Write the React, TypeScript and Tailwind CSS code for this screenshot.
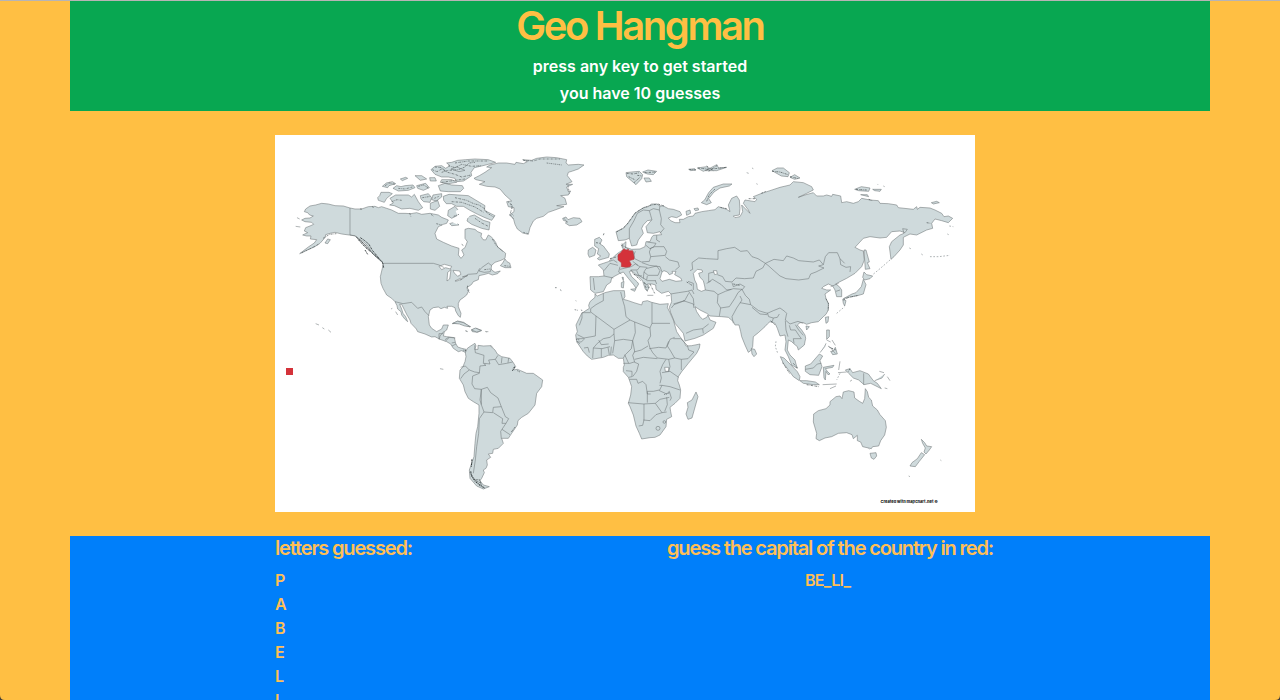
import React from "react";

const LAND = "#cfdadc";

const northAmerica = [
  "M225,219 L205,213 180,212 160,207 140,205 122,210 105,213 92,222 88,230 98,233 104,240 115,243 105,249 90,250 80,255 90,260 110,262 116,268 105,273 92,278 88,288 98,293 83,300 95,303 108,303 106,312 125,314 118,324 100,336 74,356 92,347 118,336 135,325 150,308 152,299 165,295 180,292 200,297 222,300 240,302 250,310 262,318 272,326 280,335 290,352 310,372 325,385 322,400 316,425 318,445 324,460 335,480 350,490 360,500 366,512 368,522 378,530 380,540 390,553 398,560 392,545 384,535 380,522 374,508 380,508 388,524 396,540 405,555 408,565 424,582 428,590 450,597 470,606 480,605 495,613 515,620 527,627 535,640 550,650 560,647 573,653 573,643 560,640 548,636 542,625 538,608 515,605 505,603 508,590 515,585 520,570 505,570 500,582 485,590 470,580 463,570 460,545 465,525 475,518 490,516 498,521 508,517 518,520 516,514 530,514 540,518 542,528 550,542 556,547 558,535 550,515 550,505 555,495 565,488 575,480 582,465 576,458 590,448 595,440 610,434 612,422 630,418 640,415 652,420 668,416 676,408 660,412 650,405 645,395 660,382 678,376 690,370 692,355 680,345 668,336 662,322 655,312 648,305 640,300 632,315 624,314 618,304 620,295 608,290 600,283 580,280 570,283 570,310 577,320 570,338 560,345 567,360 558,370 550,360 552,340 530,333 505,322 485,312 480,295 490,275 505,268 515,265 520,255 500,247 490,240 475,237 465,235 440,238 425,233 408,236 390,235 370,235 350,225 335,220 320,215 310,218 300,214 280,215 260,222 240,222Z",
  "M318,172 L342,172 352,176 335,190 328,202 310,196 308,188 314,182Z",
  "M345,190 L362,180 400,180 410,186 418,178 430,200 443,218 430,226 405,220 380,222 358,212 344,210 355,204Z",
  "M322,154 L334,144 352,140 362,146 342,152 338,158Z",
  "M354,160 L365,152 378,155 390,152 414,150 420,158 400,166 370,168Z M376,132 L392,127 398,130 382,137Z M420,122 L440,122 455,132 436,136Z M425,152 L452,145 463,158 445,166 428,160Z",
  "M468,104 L480,94 500,92 512,100 525,92 515,84 530,82 548,76 572,74 600,72 640,74 662,82 640,88 620,93 598,98 588,112 590,122 566,138 545,140 540,130 520,126 500,126 480,118Z",
  "M490,152 L510,145 530,150 562,152 566,160 556,170 520,170 496,168Z M464,128 L480,128 484,138 466,138Z M500,134 L530,134 545,142 520,146 496,142Z M528,102 L545,96 570,106 552,110Z",
  "M436,182 L460,176 470,188 465,202 446,200 438,192Z M474,180 L500,176 500,186 484,198 470,194Z M466,205 L488,196 494,214 480,226 466,222Z",
  "M505,184 L522,178 580,182 600,194 630,212 628,226 660,242 650,256 630,248 608,238 585,226 565,214 545,214 530,206 514,206 506,196Z",
  "M520,226 L540,214 552,228 546,242 530,250 518,242Z M580,245 L598,240 625,256 645,262 642,285 620,280 590,268 576,258Z M524,266 L542,260 552,270 530,272Z",
  "M683,384 L690,372 696,380 704,384 708,398 690,398 676,392Z M620,398 L640,384 650,392 646,410 628,412 612,408Z",
  "M66,248 L74,252 M62,274 L76,276 M150,324 L158,312 166,314 158,326Z M352,520 L348,522 M362,530 L368,540 M122,566 L132,570 M142,578 L148,582 M160,585 L168,592",
  "M532,566 L548,558 566,562 585,576 568,570 552,565Z M590,584 L604,580 620,586 608,592 592,590Z M572,588 L578,590 M632,590 L640,590",
];

const greenland =
  "M102,130 L118,122 135,112 155,98 140,96 150,90 175,84 200,84 225,88 228,82 250,86 262,80 248,74 275,76 290,70 320,66 350,68 380,74 378,84 385,90 415,88 432,90 415,102 398,108 385,112 382,122 396,140 378,148 398,148 380,156 385,170 392,168 385,180 362,182 375,190 380,208 350,212 372,215 345,225 325,232 310,244 290,250 280,258 270,278 265,298 248,294 232,282 225,268 220,250 208,240 222,230 222,218 205,215 200,200 215,198 195,180 180,162 165,156 140,154 118,148 135,140 108,134Z";

const iceland = "M368,250 L378,246 384,254 400,248 420,250 426,260 410,270 388,272 376,264 382,260 370,256Z";

const eurasia =
  "M290,162 L300,168 310,168 325,176 340,178 360,185 365,195 350,203 335,200 325,204 332,212 345,218 360,218 358,208 370,208 385,200 400,198 405,190 425,185 445,182 465,179 475,170 500,178 510,185 505,165 515,145 530,138 538,150 540,175 538,195 520,198 525,203 540,200 548,185 545,165 555,175 570,190 565,180 550,160 555,150 585,155 590,148 580,140 605,130 630,122 660,112 690,105 700,95 730,98 755,110 760,120 740,130 715,142 735,135 760,128 770,138 790,138 800,135 815,139 818,133 842,138 845,158 860,155 880,160 895,155 905,145 930,150 955,152 960,160 985,161 1010,165 1015,173 1060,178 1070,170 1072,178 1080,172 1110,174 1125,180 1145,190 1152,200 1165,198 1178,205 1165,218 1145,212 1125,207 1115,220 1118,235 1100,240 1070,255 1050,252 1030,262 1030,285 1020,300 1002,320 993,328 988,290 995,275 1020,255 1032,250 1028,236 1042,238 1035,248 1020,243 995,245 980,262 960,264 930,260 910,265 885,292 900,300 910,303 913,330 905,350 885,370 860,385 840,395 827,402 838,410 845,420 845,440 830,440 825,420 818,408 805,402 790,410 785,415 800,420 812,420 795,432 798,446 805,460 805,480 798,493 790,500 775,515 755,518 740,523 730,518 720,518 712,525 725,540 735,555 737,565 733,585 715,600 712,590 700,580 695,575 685,570 682,600 690,615 705,630 708,642 712,655 695,645 685,620 675,600 678,575 675,555 660,558 652,535 645,520 630,515 622,522 615,530 595,548 580,560 578,590 572,602 565,607 555,585 545,560 542,545 537,525 525,525 520,515 505,502 485,500 450,498 440,490 420,480 405,470 410,485 420,500 428,508 440,502 444,495 450,510 468,517 460,535 430,555 405,565 375,573 370,550 345,520 332,488 328,472 335,455 333,432 325,424 305,430 288,418 287,405 276,402 262,402 268,412 262,422 256,418 250,400 248,393 235,380 215,362 208,365 215,380 232,396 236,402 228,415 222,405 205,385 190,366 180,370 165,378 155,384 152,397 140,405 130,425 105,430 92,420 90,380 115,380 132,378 130,360 115,345 130,340 145,335 160,322 170,312 185,302 190,300 187,285 198,275 197,292 215,298 240,297 255,290 258,275 270,275 275,262 280,256 305,254 300,245 280,250 262,248 258,230 275,210 262,212 250,225 245,235 250,250 235,270 230,285 215,288 208,265 195,270 175,272 168,245 190,235 205,218 215,205 225,190 240,180 252,172 265,170 275,162Z";

const europeIslands = [
  "M104,268 L118,262 126,270 120,282 130,288 148,312 146,322 118,330 112,326 122,318 112,312 116,296 104,288Z",
  "M85,300 L98,292 108,300 104,316 88,322 84,312Z",
  "M198,68 L215,66 238,64 248,74 245,86 228,104 214,92 200,80Z M248,66 L264,60 290,64 280,74 262,72Z M252,84 L268,84 274,94 258,96Z",
  "M386,58 L404,56 408,60 392,62Z M412,54 L440,50 448,56 430,64Z M436,62 L470,44 476,54 500,52 470,62Z",
  "M434,150 L446,128 460,112 490,102 516,102 508,108 480,114 462,126 446,146 454,158 440,164 424,158Z",
  "M378,184 L390,180 392,190 380,196Z M402,176 L414,174 416,180 406,182Z",
  "M636,62 L652,54 670,54 688,68 684,80 664,78Z M690,82 L704,74 720,84 704,88Z M560,68 L566,70 M576,54 L580,56 M590,100 L592,104",
  "M884,118 L904,110 930,114 926,124 896,122Z M938,118 L964,118 960,124 944,122Z M902,134 L922,134 926,140Z M1114,158 L1130,154 1138,158 1120,162Z M952,102 L954,104 M970,108 L974,110",
  "M912,300 L918,300 928,336 922,338 930,356 916,358 914,330Z",
  "M912,366 L920,374 938,378 930,386 914,390 908,382Z M910,388 L918,404 910,432 896,436 866,442 850,446 876,432 888,428 904,410Z M848,448 L858,452 854,468 850,460Z",
  "M796,502 L806,500 804,516 798,520Z M738,528 L748,530 740,540Z M574,596 L584,598 590,612 582,620 576,612Z",
  "M184,398 L192,394 190,414 184,412Z M186,382 L190,382 190,392Z M212,418 L228,416 224,424Z M262,436 L280,436 M318,438 L330,436",
  "M661,620 L672,624 690,642 712,665 720,680 718,692 700,680 684,658 670,640Z M720,692 L740,692 766,696 778,704 760,704 730,700Z",
  "M736,648 L752,642 778,612 788,618 780,632 786,650 776,676 750,674 736,664Z",
  "M800,540 L808,540 808,560 800,568Z M800,570 L812,576 M804,588 L818,598 M816,570 L826,586 M826,592 L832,612 818,614 812,604 820,604Z M780,608 L794,590 798,580",
  "M790,652 L822,646 818,652 796,656 802,664 810,672 804,674 798,664 796,690 792,684Z M840,634 L836,660 M834,668 L860,666 M788,704 L830,702 M810,716 L828,708",
  "M856,660 L870,656 878,668 900,662 925,672 940,692 952,700 964,716 948,708 932,700 912,704 896,690 880,684 866,670Z M944,692 L966,684 974,672 M958,664 L972,668 M982,680 L990,692 M974,714 L982,716 M870,694 L876,690",
];

const africa =
  "M105,72 L112,78 135,68 160,62 180,62 193,62 195,80 190,88 205,92 222,98 245,105 248,95 262,92 275,97 300,103 325,101 322,112 330,128 340,150 350,185 360,200 372,215 378,228 395,227 420,222 418,234 410,250 385,280 365,305 355,320 353,332 358,345 362,360 360,385 345,400 330,412 332,425 335,440 320,448 318,470 300,495 285,502 270,503 245,507 238,490 228,468 220,435 210,410 205,400 212,375 215,350 208,330 205,322 190,305 190,292 193,285 190,265 175,265 160,255 145,256 130,262 95,268 82,258 70,245 50,215 47,195 52,185 48,165 65,130 88,115 86,106 90,95 105,82Z M408,366 L414,380 406,408 396,444 384,448 378,432 384,412 382,398 396,390Z";

const southAmerica =
  "M106,128 L112,115 122,108 135,100 138,108 134,118 144,118 144,106 160,108 180,107 186,112 195,120 202,132 215,140 240,145 250,158 257,170 250,180 262,178 272,182 290,190 310,190 338,210 335,230 320,250 315,285 295,310 275,322 264,332 262,345 245,370 235,385 215,385 220,400 205,415 190,418 188,430 175,432 182,442 170,450 172,465 168,475 160,480 163,488 155,505 150,512 160,525 178,530 160,537 140,528 120,505 118,480 125,460 132,440 135,400 138,370 143,350 147,310 147,285 130,275 115,265 105,245 100,225 88,205 90,180 98,172 105,155 108,140Z";

const australia = [
  "M131,282 L145,272 168,266 180,255 180,245 198,230 210,228 216,236 220,216 236,212 252,216 254,234 268,244 278,250 284,236 286,206 292,215 296,232 304,240 308,258 322,270 330,284 346,302 349,322 344,345 332,362 326,378 308,380 304,386 278,380 272,366 262,362 262,346 250,356 246,344 230,338 205,340 185,350 165,354 148,362 138,356 140,340 130,306Z",
  "M300,400 L318,398 320,408 312,418 304,414Z",
  "M454,358 L464,368 470,378 485,380 478,390 468,402 462,396 466,384 458,370Z M454,398 L464,404 448,424 436,440 420,438 426,428 442,416Z",
  "M416,468 L420,470 M511,420 L514,422 M296,386 L298,388",
];

function WorldMap() {
  return (
    <svg className="block h-[377px] w-[700px]" viewBox="275 135 700 377" fill={LAND} stroke="#697173" strokeWidth="1.6" strokeLinejoin="round" role="img" aria-label="World map">
      <rect x="275" y="135" width="700" height="377" fill="#fff" stroke="none" />

      <g transform="translate(275 135) scale(.33333)">
        {northAmerica.map((d) => <path key={d.slice(0, 14)} d={d} />)}
        <g fill="#fff">
          <path d="M492,394 L508,388 530,394 526,402 512,398 500,404Z M518,412 L528,404 524,432 516,438Z M534,406 L554,408 558,418 548,424 538,414Z M540,438 L556,430 560,432 546,438Z M562,426 L578,420 576,424Z" />
          <path d="M542,228 L558,220 566,236 590,234 580,248 558,254 546,268 532,262 548,244Z" stroke="none" />
        </g>
        <g fill="none">
          <path d="M225,219 V300 L240,303 256,318 276,334 292,355 310,370 326,386 M326,385 H475 L492,390 508,398 M556,436 L580,418 606,416 614,400 M360,500 L384,506 410,502 428,520 440,516 450,530 462,542 M492,613 V596 H504 M510,614 L522,606 M530,624 L540,622" />
          <path stroke="#454c4e" strokeWidth="3" strokeDasharray="6 2 2 1" d="M244,306 L262,322 278,340 300,362 322,380 326,398 M256,308 L268,316 282,328 292,346 314,372 M250,314 L268,334 284,348 M270,345 L278,358" />
          <path stroke="#4c5456" strokeWidth="1.9" strokeDasharray="6 3 2 2" d="M472,104 L486,110 500,102 518,112 540,118 560,126 588,120 M480,96 L500,98 512,108 M520,92 L540,98 560,88 590,94 620,92 M500,112 L520,106 550,104 570,96 582,84 600,82 M500,142 L540,136 570,132 M430,154 L446,150 462,160 M540,188 L575,196 596,206 612,210 630,222 636,234 656,246 M530,200 L560,202 600,216 626,232 M540,84 L580,78 640,78 M330,152 L344,144 360,148 M370,160 L390,162 412,156 M442,188 L468,184 M478,190 L492,184 M350,200 L366,194 380,196 M600,250 L620,264 640,274 M255,222 L264,222 M292,214 L296,220 M404,234 L408,246 M468,238 L476,244 M484,266 L500,270 M536,244 L552,238 M652,312 L664,332 684,350 M578,452 L576,462 584,474 M560,328 L566,332 M628,404 L644,402 M688,392 L704,394 M144,310 L164,298 184,296 M80,354 L104,342 130,328" />
        </g>
      </g>

      <g transform="translate(440 135) scale(.33333)">
        <path d={greenland} />
        <path d={iceland} />
        <path fill="none" stroke="#596163" strokeWidth="2" strokeDasharray="5 3 2 2" d="M204,200 L218,212 210,238 220,252 M212,206 L216,220 M214,236 L222,244 M250,76 L280,78 300,72 360,72 M320,84 L366,90 M372,250 L382,262 M384,150 L388,176 M250,292 L264,296 M345,458 L352,458 M360,464 L366,468 M404,524 L414,526 M424,524 L426,528 M407,497 L409,498" />
      </g>

      <g transform="translate(560 150) scale(.33333)">
        <path d={eurasia} />
        {europeIslands.map((d) => <path key={d.slice(0, 14)} d={d} />)}
        <g fill="#fff">
          <path d="M306,366 L312,362 322,366 328,374 338,370 336,364 348,364 344,374 362,384 366,392 348,394 328,388 306,394 300,386Z" />
          <path d="M400,370 L412,358 426,360 428,366 416,370 420,382 430,392 434,408 436,420 424,424 412,418 410,402 404,390Z" />
          <path d="M460,362 L470,362 472,372 464,374Z" />
        </g>
        <g fill="none">
          <path d="M208,265 L208,236 222,212 232,190 250,180 268,182 280,176 298,180 300,166 M268,182 L272,196 276,210 M298,180 L304,206 302,224 312,236 300,250 M290,256 L290,270 300,276 M262,276 L288,280 282,290 270,296 M258,286 L270,296 284,290 312,290 320,304 316,316 272,320 268,306 272,296 M220,304 L224,326 244,336 268,334 272,320 M316,320 L328,330 354,336 358,350 346,360 M246,338 L268,346 300,350 306,366 M258,356 L290,348 300,362 294,376 264,376 252,366Z M132,362 L150,340 174,346 M148,334 L160,330 172,338 M180,350 L176,366 184,372 M180,358 L214,350 226,342 240,350 232,360 212,360 M240,350 L262,352 M212,360 L222,374 246,378 M230,362 L236,376 252,386 M252,366 L250,384 262,392 288,392 M262,378 L260,390 M286,392 L290,402 M100,384 L104,420 M132,378 L160,384 M226,304 L220,318 M218,334 L234,346 M186,280 L190,290" />
          <path d="M390,362 L398,358 396,338 416,324 440,326 474,328 474,302 500,296 524,292 542,304 562,302 576,320 594,326 616,340 608,354 588,364 580,384 554,386 528,384 516,396 496,394 488,380 472,374 M446,396 V370 L462,366 M616,340 L642,328 670,332 680,318 700,324 716,332 760,336 778,330 790,344 776,348 792,354 768,366 752,372 746,386 716,390 678,386 660,378 644,364 624,346 616,340 M790,344 L796,320 806,308 832,308 840,326 854,340 M840,326 L842,344 858,352 872,350 870,366 M812,410 L836,400 M828,424 L840,420" />
          <path d="M446,396 L458,388 484,404 500,420 514,418 M436,420 L462,424 474,434 496,424 520,416 546,418 M474,434 L472,458 482,474 478,498 M482,474 L508,470 524,446 534,428 546,418 M546,418 L556,436 568,448 572,464 540,458 M520,520 L516,500 530,474 546,450 540,438 M516,398 L520,410 540,402 554,410 546,420 M572,464 L596,482 622,490 640,482 660,474 674,484 680,490 676,510 690,522 714,514 730,520 M576,472 L600,492 622,494 M622,488 L626,500 640,504 636,518 M640,504 L652,502 658,492 M676,512 L678,540 684,560 M688,526 L692,540 706,540 718,558 724,566 700,566 702,580 M706,524 L716,540 730,556" />
          <path d="M384,394 L400,400 400,420 M332,432 L356,428 382,424 396,420 402,432 M340,462 L374,452 386,430 M370,452 L400,462 402,474 M374,452 L342,464 334,474 M378,550 L400,540 428,536 446,522 M428,536 L430,550 M386,424 L400,446 402,466 M452,394 L440,400 M736,658 L760,654 772,642 784,640 M911,670 V704" />
          <path stroke="#4c5456" strokeWidth="2.1" strokeDasharray="6 3 2 2" d="M170,246 L190,234 202,222 214,204 226,188 246,176 270,166 294,162 312,168 M200,70 L220,72 238,68 M206,80 L226,90 M222,98 L240,82 M232,76 L246,78 M254,68 L286,66 M388,58 L408,60 M414,54 L448,58 498,52 M440,48 L460,62 M446,64 L472,46 M440,154 L448,134 466,116 M636,64 L660,66 684,74 M690,80 L716,86 M150,326 L172,320 M184,284 L188,296 M194,290 L206,298 M222,372 L242,392 M252,396 L262,424 M256,400 L266,414 M270,402 L284,430 M108,278 L122,280 M132,250 L130,256 M380,396 L396,406 M520,402 L540,406 M604,130 L618,124 M566,146 L586,146 M926,148 L938,152 M850,450 L866,442 896,436 M632,512 L644,524 M888,118 L920,120 M1100,218 L1112,220 M700,640 L712,654 M668,638 L690,672 M808,590 L826,610 M814,594 L828,600 M870,656 L864,666 M740,704 L776,710 M500,176 L480,172 M798,446 L806,462 804,482" />
          <path stroke="#667073" strokeDasharray="5 5" d="M990,330 L960,356 938,374 M1048,294 L1056,298 M1084,312 L1090,316 M1110,320 H1136 L1170,316 M1168,228 L1180,230 M1162,252 L1166,254 M830,490 L854,470 M648,574 L646,590 654,612 M840,670 L830,690" />
        </g>
        <path d="M188,300 L192,296 198,300 206,298 206,302 218,302 222,320 222,328 208,332 214,344 210,350 198,352 184,350 184,338 174,330 174,314 182,308Z" fill="#d4323a" stroke="#b3383e" />
      </g>

      <g transform="translate(560 270) scale(.33333)">
        <path d={africa} />
        <path fill="#fff" d="M314,292 L326,292 326,304 316,304Z" />
        <g fill="none">
          <path d="M130,70 L130,92 108,104 92,116 92,126 M66,128 H92 M92,126 L108,138 106,198 72,204 52,194 M108,138 L162,178 V192 L150,202 130,206 112,220 100,234 M162,178 L210,150 198,140 194,110 188,90 M182,66 L188,90 M210,150 L224,156 226,188 218,212 M224,156 L270,174 M276,98 V160 H330 M276,160 L270,174 272,198 264,212 270,234 278,248 292,264 M162,192 L164,212 158,250 M164,212 L190,208 218,212 214,236 196,254 190,264 M218,212 L224,244 218,256 224,276 M222,246 L244,240 264,228 M224,268 L250,262 292,266 M292,264 L326,268 344,264 364,268 M344,264 L330,240 322,228 330,208 344,202 M268,236 L296,232 318,234 326,214 M340,206 L362,206 382,226 386,240 402,246 384,266 364,268 V300 M318,268 L308,284 300,304 304,324 300,340 M326,268 L330,290 326,304 M306,308 L330,304 356,322 M306,346 L330,350 360,360 M298,346 L306,346 298,362 320,372 328,364 M298,360 L280,364 262,364 262,372 M208,328 L230,328 234,340 248,334 258,344 262,372 272,372 M204,398 L250,402 286,400 M262,372 L262,398 M252,402 V450 L248,466 236,468 M250,450 L270,452 288,434 306,428 320,426 M286,400 L300,388 328,382 M286,400 L306,428 M320,382 L322,404 314,424 M328,364 L334,384 330,392 M190,280 H210 L222,276 M198,302 L216,304 216,320 206,322 M222,276 L236,282 230,304 218,320 M194,254 L206,280 M66,128 L66,144 58,166 M50,206 H74 M50,216 L64,216 72,208 M72,234 L84,232 88,248 M100,234 L98,264 M100,234 L126,236 150,230 M124,236 V262 M144,232 L148,254 M154,230 L152,254 M116,210 L124,224 146,222" />
          <path stroke="#4c5456" strokeDasharray="4 2" d="M48,208 L60,210 M52,214 L60,222 M312,374 L330,368" />
          <circle cx="294" cy="475" r="6" /><circle cx="313" cy="456" r="4" />
        </g>
      </g>

      <g transform="translate(430 310) scale(.33333)">
        <path d={southAmerica} />
        <path d="M68,40 L82,34 100,38 122,50 104,48 88,42Z M124,60 L136,54 154,62 140,66Z M106,62 L112,64 M166,64 L170,66 M30,176 L40,178" />
        <g fill="none">
          <path d="M134,106 L136,128 162,136 160,160 168,166 150,168 148,190 128,198 126,222 134,236 154,238 154,284 162,306 M92,172 L106,168 118,180 102,192 92,206 M118,180 L134,186 148,188 M162,160 L180,162 176,150 196,148 204,136 M196,148 L206,164 230,160 248,156 M216,142 L214,160 M236,144 L234,158 M154,238 L172,232 182,248 204,264 214,290 190,292 188,308 162,306 148,326 146,370 140,410 136,450 130,490 M190,308 L218,326 216,340 228,340 236,326 226,320 214,290 M228,340 L212,364 214,386 M216,358 L240,374 M154,238 L150,270 154,284 M28,88 L30,78 42,64 M46,94 L58,82 76,84 M66,108 L78,102" />
          <path stroke="#30383a" strokeWidth="3.2" strokeDasharray="5 2 3 2" d="M126,448 L124,470 M122,484 L126,500 136,514 150,526 164,534 M254,170 L247,182" />
          <path stroke="#4c5456" strokeWidth="2.4" strokeDasharray="3 2" d="M120,488 L134,510 154,520 M132,508 L150,510 154,528 M182,106 L188,112 M244,366 L256,350 M108,122 L98,120 M262,182 L270,186" />
        </g>
      </g>

      <g transform="translate(770 320) scale(.33333)">
        {australia.map((d) => <path key={d.slice(0, 14)} d={d} />)}
      </g>

      <rect x="286" y="368" width="7" height="7" fill="#d4323a" stroke="none" />
      <text x="880.5" y="503.4" fontFamily="Inter, sans-serif" fontSize="4.1" fontWeight="800" fill="#222" stroke="none" textLength="57.5" lengthAdjust="spacingAndGlyphs">Created with mapchart.net ©</text>
    </svg>
  );
}

const guessed = ["P", "A", "B", "E", "L", "I"];

export default function App() {
  return (
    <div className="relative h-[700px] overflow-hidden border-t border-[#b7b4b5] bg-[#ffbf43] font-['Inter','Liberation_Sans',sans-serif] text-[#ffbf55]">
      <div className="mx-auto w-[1140px]">
        <header className="h-[110px] bg-[#08a751] text-center">
          <h1 className="h-[51px] text-[40px] leading-[50px] font-semibold tracking-[-2.4px] text-[#ffbf43]">Geo Hangman</h1>
          <p className="h-[27px] text-base leading-[29px] font-semibold text-white">press any key to get started</p>
          <p className="text-base leading-[29px] font-semibold text-white">you have 10 guesses</p>
        </header>
        <main className="py-6 pl-[205px]">
          <WorldMap />
        </main>
        <section className="flex h-[180px] bg-[#007ffa] pl-[205px]">
          <div className="w-[392px]">
            <h2 className="h-8 text-xl leading-6 font-semibold tracking-[-1.15px]">letters guessed:</h2>
            <ul className="text-base leading-6 font-semibold">
              {guessed.map((letter) => <li key={letter}>{letter}</li>)}
            </ul>
          </div>
          <div>
            <h2 className="h-8 text-xl leading-6 font-semibold tracking-[-1.15px]">guess the capital of the country in red:</h2>
            <p className="pl-[138px] text-base leading-6 font-semibold tracking-[-0.7px]">BE_LI_</p>
          </div>
        </section>
      </div>
      <svg className="absolute bottom-0 left-0 size-[5px]" viewBox="0 0 5 5" fill="#454039"><path d="M0 0Q0 5 5 5H0Z" /></svg>
      <svg className="absolute right-0 bottom-0 size-[5px]" viewBox="0 0 5 5" fill="#454039"><path d="M5 0Q5 5 0 5H5Z" /></svg>
    </div>
  );
}
